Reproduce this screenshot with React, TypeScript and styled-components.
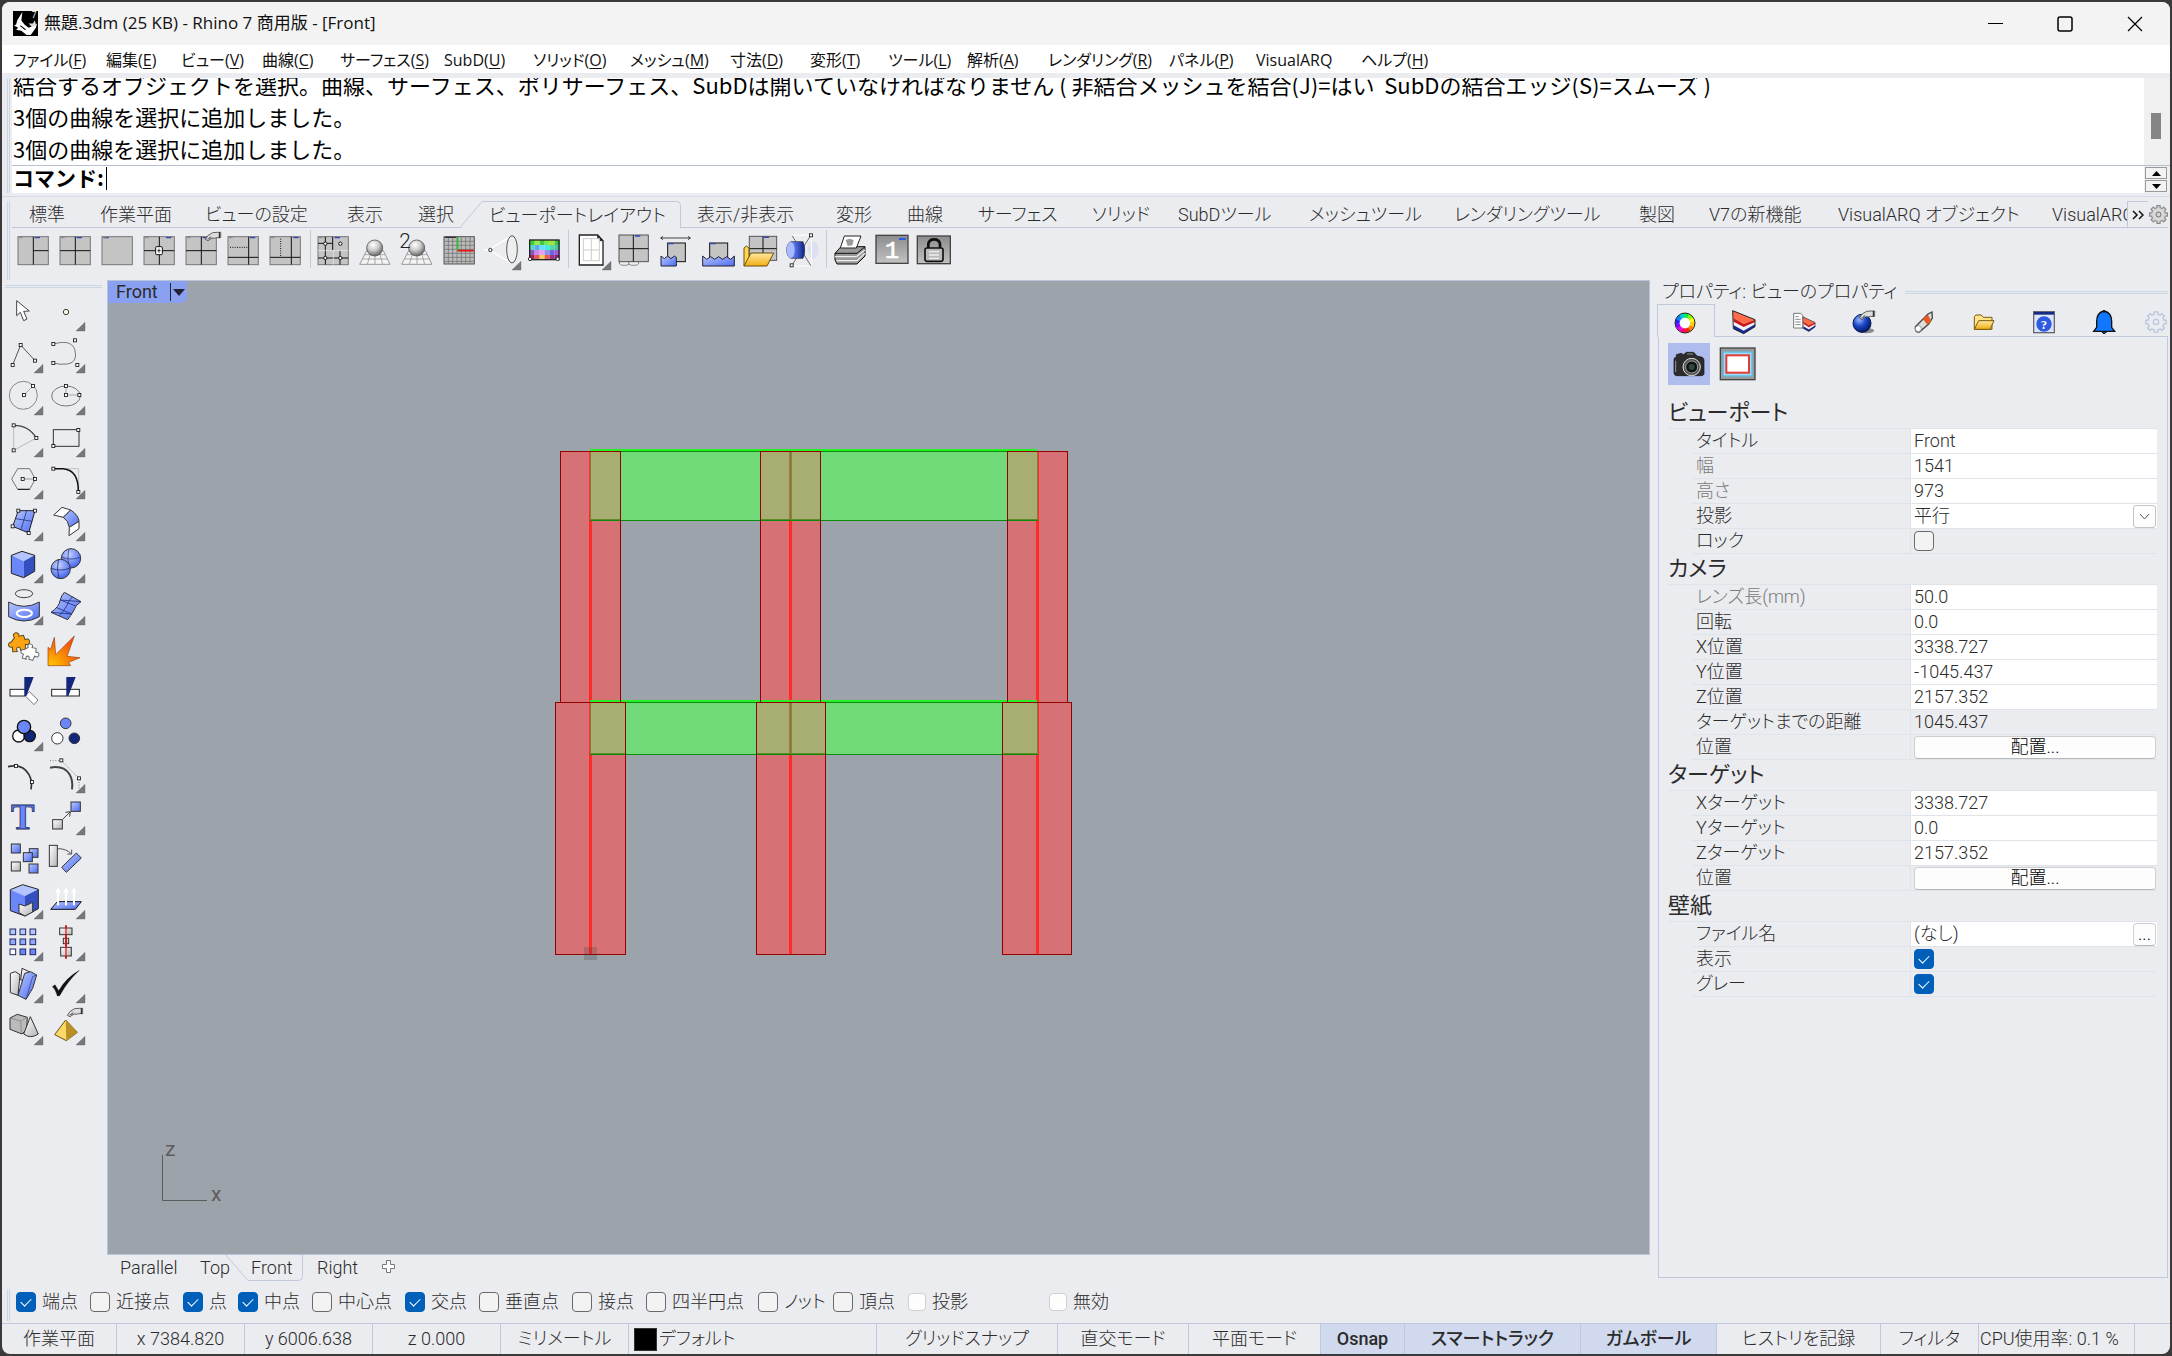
import React from "react";
import styled, { createGlobalStyle, css } from "styled-components";

const ui = `Roboto, "Noto Sans CJK JP", "Liberation Sans", sans-serif`;
const sys = `"Open Sans", "Noto Sans CJK JP", "Noto Sans", sans-serif`;

const C = {
  face: "#ebecf0",
  line: "#c0c8de",
  soft: "#dfe3ea",
  text: "#2b2b2b",
  dim: "#7a7a7a",
  blue: "#6a86f8",
  navy: "#14267a",
  accent: "#005fb8",
};

const Global = createGlobalStyle`
  * { box-sizing: border-box; }
  body { margin: 0; background: #3b3939; }
  button, input, select { font: inherit; color: inherit; margin: 0; }
  button { cursor: default; }
`;

const Frame = styled.div`
  height: 100vh;
  padding: 2px;
  background: #3b3939;
`;

const Window = styled.div`
  height: 100%;
  display: flex;
  flex-direction: column;
  background: ${C.face};
  border-radius: 8px;
  overflow: hidden;
  font-family: ${ui};
  font-weight: 300;
  font-size: 18px;
  line-height: 24px;
  font-feature-settings: "palt";
  color: ${C.text};
  white-space: nowrap;
`;

/* ---------- title and menu ---------- */

const TitleBar = styled.header`
  flex: none;
  height: 43px;
  padding-left: 11px;
  display: flex;
  align-items: center;
  background: #f3f3f3;
  font-family: ${sys};
  font-weight: 400;
  font-size: 17px;
  color: #111;
`;

const TitleText = styled.span`
  flex: 1;
  padding: 0 0 2px 6px;
`;

const CaptionButton = styled.button`
  width: 70px;
  height: 41px;
  padding: 0;
  border: 0;
  background: none;
  display: grid;
  place-items: center;
`;

const MenuBar = styled.nav`
  flex: none;
  height: 28px;
  padding: 2px 0 0 11px;
  display: flex;
  align-items: center;
  background: #fff;
  font-family: ${sys};
  font-weight: 400;
  font-size: 16px;
  color: #111;
`;

const MenuItem = styled.button<{ $w: number }>`
  width: ${(p) => p.$w}px;
  padding: 0;
  border: 0;
  background: none;
  text-align: left;
  u { text-underline-offset: 2px; }
`;

/* ---------- command area ---------- */

const Dock = styled.section`
  flex: none;
  display: flex;
  gap: 2px;
  padding-left: 5px;
`;

const Grip = styled.div`
  width: 3px;
  border: solid #ccd5e2;
  border-width: 0 1px;
`;

const CommandDock = styled(Dock)`
  height: 115px;
  margin-top: 5px;
`;

const CommandBody = styled.div`
  flex: 1;
  min-width: 0;
  display: flex;
  flex-direction: column;
  background: #fff;
  font-family: "Noto Sans CJK JP", sans-serif;
  font-feature-settings: normal;
  font-weight: 400;
  font-size: 22px;
  line-height: 32px;
  color: #000;
`;

const HistoryRow = styled.div`
  flex: 1;
  min-height: 0;
  display: flex;
  border-bottom: 1px solid #b6c2d2;
`;

const History = styled.div`
  flex: 1;
  min-width: 0;
  padding: 0 0 1px 1px;
  display: flex;
  flex-direction: column;
  justify-content: flex-end;
  overflow: hidden;
`;

const HistoryLine = styled.div`
  flex: none;
`;

const ScrollTrack = styled.div`
  width: 26px;
  padding: 35px 9px 0 7px;
  background: #f0f0f0;
`;

const ScrollThumb = styled.div`
  height: 26px;
  background: #858585;
`;

const PromptRow = styled.div`
  flex: none;
  height: 27px;
  display: flex;
  align-items: center;
  gap: 2px;
  padding-left: 1px;
`;

const PromptLabel = styled.label`
  padding-bottom: 4px;
  font-size: 21px;
  line-height: 23px;
  font-weight: 700;
`;

const Caret = styled.span`
  width: 1px;
  height: 23px;
  margin-bottom: 2px;
  background: #000;
`;

const PromptInput = styled.input`
  flex: 1;
  min-width: 0;
  height: 25px;
  border: 0;
  padding: 0;
  outline: 0;
  background: none;
`;

const Spinner = styled.div`
  width: 26px;
  height: 100%;
  padding: 1px 3px 1px 1px;
  display: grid;
  grid-template-rows: 1fr 1fr;
  gap: 1px;
  background: #f0f0f0;
`;

const SpinButton = styled.button`
  padding: 0;
  border: 1px solid #9a9a9a;
  background: #f3f3f3;
  display: grid;
  place-items: center;
`;

/* ---------- ribbon ---------- */

const Ribbon = styled(Dock)`
  height: 84px;
  margin-top: 3px;
  padding-top: 4px;
  border-top: 1px solid #d3dae8;
`;

const RibbonBody = styled.div`
  flex: 1;
  min-width: 0;
  padding-right: 2px;
`;

const RibbonTabs = styled.div`
  height: 27px;
  display: flex;
  padding-left: 17px;
  border-bottom: 1px solid ${C.line};
`;

const RibbonTabScroller = styled.div`
  flex: 1;
  min-width: 0;
  height: 27px;
  display: flex;
  overflow: hidden;
`;

const RibbonTab = styled.button<{ $w: number; $on?: boolean }>`
  flex: none;
  width: ${(p) => p.$w}px;
  height: 26px;
  padding: 2px 0 0;
  border: 0;
  background: none;
  text-align: left;
  ${(p) =>
    p.$on &&
    css`
      position: relative;
      height: 27px;
      margin: 0 16px 0 -7px;
      padding: 1px 0 0 7px;
      background: ${C.face};
      border: solid ${C.line};
      border-width: 1px 1px 0 0;
      border-radius: 0 5px 0 0;
    `}
`;

const TabSlope = styled.svg`
  position: absolute;
  left: -22px;
  top: -1px;
`;

const TabMore = styled.button`
  width: 21px;
  padding: 0;
  border: solid ${C.line};
  border-width: 1px 0 0 1px;
  background: ${C.face};
  display: grid;
  place-items: center;
`;

const GearButton = styled.button`
  width: 20px;
  padding: 0;
  border: 0;
  background: none;
  display: grid;
  place-items: center;
`;

const IconRow = styled.div`
  height: 46px;
  padding: 2px 0;
  display: flex;
`;

const Tool = styled.button`
  width: 42px;
  height: 42px;
  padding: 0;
  border: 0;
  background: none;
  display: block;
`;

const Divider = styled.div`
  width: 6px;
  height: 38px;
  border-left: 1px solid #c9cbd2;
  margin-left: 4px;
  margin-right: -4px;
`;

/* ---------- middle ---------- */

const Middle = styled.main`
  flex: 1;
  min-height: 0;
  display: flex;
`;

const Palette = styled.aside`
  width: 105px;
  padding: 5px 5px 0 0;
`;

const PaletteGrip = styled.div`
  height: 3px;
  margin: 0 0 3px 3px;
  border: solid #ccd5e2;
  border-width: 1px 0;
`;

const PaletteGrid = styled.div`
  display: grid;
  grid-template-columns: 42px 42px;
`;

const ViewColumn = styled.section`
  flex: 1;
  min-width: 0;
  display: flex;
  flex-direction: column;
`;

const Viewport = styled.div`
  flex: 1;
  min-height: 0;
  position: relative;
  border: 1px solid #b9c3da;
  background: #9da3aa;
  overflow: hidden;
`;

const Scene = styled.svg`
  position: absolute;
  inset: 0;
  width: 100%;
  height: 100%;
`;

const Axes = styled.svg`
  position: absolute;
  left: 50px;
  bottom: 48px;
`;

const ViewTitle = styled.button`
  position: absolute;
  left: 0;
  top: 0;
  height: 22px;
  padding: 0 0 0 8px;
  display: flex;
  align-items: center;
  gap: 11px;
  border: 0;
  border-radius: 0 0 6px 0;
  background: #8aa0f0;
  font-weight: 400;
  line-height: 22px;
`;

const ViewTabs = styled.div`
  height: 30px;
  padding-left: 13px;
  display: flex;
  align-items: flex-start;
`;

const ViewTab = styled.button<{ $w: number; $on?: boolean }>`
  width: ${(p) => p.$w}px;
  height: 26px;
  padding: 0;
  border: 0;
  background: none;
  text-align: left;
  ${(p) =>
    p.$on &&
    css`
      position: relative;
      margin-right: 14px;
      padding-left: 3px;
      border: solid ${C.line};
      border-width: 0 1px 1px 0;
      border-radius: 0 0 5px 0;
    `}
`;

const ViewSlope = styled.svg`
  position: absolute;
  left: -22px;
  top: 0;
`;

/* ---------- properties ---------- */

const Side = styled.aside`
  width: 520px;
  padding: 0 2px 7px 7px;
  display: flex;
  flex-direction: column;
`;

const SideTitle = styled.div`
  height: 24px;
  padding-left: 5px;
  display: flex;
  align-items: center;
  gap: 8px;
`;

const SideGrip = styled.div`
  flex: 1;
  height: 3px;
  border: solid #ccd5e2;
  border-width: 1px 0;
`;

const SideTabs = styled.div`
  height: 33px;
  display: flex;
`;

const SideTab = styled.button<{ $on?: boolean }>`
  width: 60px;
  padding: 3px 3px 0 0;
  border: solid ${C.line};
  border-width: 0 0 1px;
  background: none;
  display: grid;
  place-items: center;
  ${(p) =>
    p.$on &&
    css`
      width: 58px;
      border-width: 1px 1px 0 1px;
    `}
  &:last-child {
    flex: 1;
    width: auto;
    padding-right: 0;
    justify-items: end;
  }
`;

const SideBody = styled.div`
  flex: 1;
  min-height: 0;
  margin-left: 1px;
  padding: 6px 10px 0 9px;
  border: solid ${C.line};
  border-width: 0 1px 1px;
`;

const ModeRow = styled.div`
  display: flex;
  gap: 7px;
  margin-bottom: 13px;
`;

const ModeButton = styled.button<{ $on?: boolean }>`
  width: 42px;
  height: 42px;
  padding: 0;
  border: 0;
  background: ${(p) => (p.$on ? "#aebcee" : "none")};
`;

const GroupTitle = styled.h2`
  height: 31px;
  margin: 0;
  border-bottom: 1px solid ${C.soft};
  font-size: 22px;
  line-height: 30px;
  font-weight: 400;
`;

const Row = styled.div`
  height: 25px;
  margin-left: 24px;
  display: grid;
  grid-template-columns: 219px 1fr;
  border-bottom: 1px solid ${C.soft};
`;

const RowLabel = styled.label<{ $dim?: boolean }>`
  padding-left: 4px;
  border-right: 1px solid ${C.soft};
  color: ${(p) => (p.$dim ? C.dim : C.text)};
`;

const Cell = styled.div<{ $white?: boolean }>`
  min-width: 0;
  display: flex;
  align-items: center;
  position: relative;
  padding-left: 3px;
  background: ${(p) => (p.$white ? "#fff" : "none")};
`;

const CellInput = styled.input`
  flex: 1;
  min-width: 0;
  height: 24px;
  border: 0;
  padding: 0;
  background: none;
  outline: 0;
`;

const CellSelect = styled.select`
  flex: 1;
  height: 24px;
  border: 0;
  padding: 0;
  background: none;
  appearance: none;
  outline: 0;
`;

const Chevron = styled.span`
  position: absolute;
  right: 1px;
  top: 1px;
  width: 23px;
  height: 23px;
  border: 1px solid #c4c4c4;
  border-radius: 3px;
  background: #fdfdfd;
  display: grid;
  place-items: center;
  pointer-events: none;
`;

const PushButton = styled.button<{ $small?: boolean }>`
  height: 23px;
  padding: 0;
  border: 1px solid #cfcfcf;
  border-bottom-color: #b8b8b8;
  border-radius: 4px;
  background: #fdfdfd;
  color: #000;
  line-height: 20px;
  ${(p) => (p.$small ? "width: 23px;" : "flex: 1;")}
  margin-right: 1px;
`;

const Check = styled.input<{ $faint?: boolean }>`
  appearance: none;
  flex: none;
  width: ${(p) => (p.$faint ? 18 : 20)}px;
  height: ${(p) => (p.$faint ? 18 : 20)}px;
  border: 1px solid ${(p) => (p.$faint ? "#d0d0d0" : "#6a6a6a")};
  border-radius: 4px;
  background: ${(p) => (p.$faint ? "#fdfdfd" : "#f3f3f3")};
  display: grid;
  place-content: center;
  &:checked {
    background: ${C.accent};
    border-color: ${C.accent};
  }
  &:checked::after {
    content: "";
    width: 9px;
    height: 5px;
    border: solid #fff;
    border-width: 0 0 1px 1px;
    transform: rotate(-45deg);
    margin-bottom: 3px;
  }
`;

/* ---------- bottom bars ---------- */

const SnapBar = styled(Dock)`
  height: 38px;
  padding-top: 4px;
  padding-bottom: 2px;
  gap: 6px;
`;

const Snaps = styled.div`
  display: flex;
  align-items: center;
  padding-bottom: 6px;
`;

const Snap = styled.label<{ $w: number }>`
  width: ${(p) => p.$w}px;
  display: flex;
  align-items: center;
  gap: 6px;
`;

const Status = styled.footer`
  flex: none;
  height: 31px;
  display: grid;
  grid-template-columns: 115fr 128fr 128fr 128fr 128fr 248fr 181fr 131fr 132fr 84fr 176fr 136fr 164fr 98fr 156fr 35fr;
  border-top: 1px solid ${C.line};
`;

const StatusCell = styled.button<{ $on?: boolean }>`
  min-width: 0;
  padding: 0;
  border: 0;
  border-right: 1px solid ${C.line};
  background: ${(p) => (p.$on ? "#d0d9ee" : "none")};
  font-weight: ${(p) => (p.$on ? 500 : 300)};
  text-align: center;
  &:last-child { border-right: 0; }
`;

const LayerCell = styled(StatusCell)`
  display: flex;
  align-items: center;
  gap: 2px;
  padding-left: 5px;
`;

const MeterCell = styled(StatusCell)`
  padding-left: 1px;
  text-align: left;
`;

const Swatch = styled.span`
  width: 23px;
  height: 23px;
  background: #000;
  border: 1px solid #333;
`;

/* ---------- icon parts ---------- */

const N = ({ x, y }: { x: number; y: number }) => (
  <rect x={x - 4.5} y={y - 4.5} width="9" height="9" fill="#fff" stroke="#111" strokeWidth="2.5" />
);

const GradientDefs = styled.svg`
  position: absolute;
`;

const Gradients = () => (
  <GradientDefs width="0" height="0" aria-hidden="true">
    <defs>
      <linearGradient id="gb" x1="0" y1="0" x2="1" y2="1">
        <stop offset="0" stopColor="#b9c8ff" />
        <stop offset="1" stopColor="#4d6cf0" />
      </linearGradient>
      <linearGradient id="gcyl" x1="0" y1="0" x2="1" y2="0">
        <stop offset="0" stopColor="#9fb2fb" />
        <stop offset="0.4" stopColor="#5b7af5" />
        <stop offset="1" stopColor="#0e2280" />
      </linearGradient>
      <linearGradient id="gg" x1="0" y1="0" x2="1" y2="1">
        <stop offset="0" stopColor="#fff" />
        <stop offset="1" stopColor="#b4b4b4" />
      </linearGradient>
      <linearGradient id="gk" x1="0" y1="0" x2="0" y2="1">
        <stop offset="0" stopColor="#8c8c8c" />
        <stop offset="1" stopColor="#c2c2c2" />
      </linearGradient>
      <linearGradient id="gy" x1="0" y1="0" x2="0" y2="1">
        <stop offset="0" stopColor="#ffe9a0" />
        <stop offset="1" stopColor="#f3ad12" />
      </linearGradient>
      <radialGradient id="gs" cx="0.4" cy="0.3" r="0.7">
        <stop offset="0" stopColor="#fff" />
        <stop offset="0.5" stopColor="#ccc" />
        <stop offset="1" stopColor="#666" />
      </radialGradient>
      <radialGradient id="gbs" cx="0.4" cy="0.3" r="0.7">
        <stop offset="0" stopColor="#c6d2ff" />
        <stop offset="1" stopColor="#4466ee" />
      </radialGradient>
      <radialGradient id="gdb" cx="0.35" cy="0.3" r="0.7">
        <stop offset="0" stopColor="#9db8ff" />
        <stop offset="0.5" stopColor="#1c49c8" />
        <stop offset="1" stopColor="#041a6a" />
      </radialGradient>
      <radialGradient id="gf" cx="0.1" cy="1" r="1">
        <stop offset="0" stopColor="#ffc400" />
        <stop offset="1" stopColor="#f0500a" />
      </radialGradient>
    </defs>
  </GradientDefs>
);

type Icon = { n: string; t?: boolean; g: React.ReactNode };

const Glyph = ({ x, y, icon }: { x: number; y: number; icon: Icon }) => (
  <svg width="42" height="42" viewBox={`${x} ${y} 126 126`} fill="none" stroke="#333" strokeWidth="3" aria-hidden="true">
    {icon.g}
    {icon.t && <path d={`M${x + 96} ${y + 120}L${x + 123} ${y + 94}V${y + 120}Z`} fill="#77787c" stroke="#55565a" strokeWidth="1" />}
  </svg>
);

const Hand = ({ x, y }: { x: number; y: number }) => (
  <g transform={`translate(${x} ${y})`}>
    <path d="M0 22Q6 8 22 2L36 1H46V17H34Q28 20 20 18L8 26Z" fill="#ddd" stroke="#444" strokeWidth="2.5" />
    <path d="M42 1V18" stroke="#111" strokeWidth="3" />
    <path d="M4 22L18 12L16 22Z" fill="#777" stroke="none" />
  </g>
);

const puzzle = "M-22-8L-10-18Q-16-30-4-32Q8-30 4-20L18-20L20-6Q32-10 32 2Q30 14 18 8L14 24L0 22Q2 12-6 12Q-14 14-10 24L-24 22L-22 8Q-34 8-32-2Q-30-8-22-8Z";

const palette: Icon[] = [
  { n: "選択", g: <path d="M50 62V107L61 97L71 122L81 117L71 94L88 93Z" fill="#fff" stroke="#444" /> },
  { n: "点", t: true, g: <circle cx="198" cy="96" r="8" fill="#f4f8e8" stroke="#444" /> },
  { n: "ポリライン", t: true, g: <><path d="M38 255L62 195L105 242" stroke="#555" /><N x={38} y={255} /><N x={62} y={195} /><N x={105} y={242} /></> },
  { n: "曲線", t: true, g: <><path d="M160 192C190 184 216 184 224 208C230 232 226 248 202 252Q180 255 160 249" stroke="#777" /><N x={160} y={192} /><N x={160} y={249} /><N x={225} y={181} /><N x={232} y={255} /></> },
  { n: "円", t: true, g: <><circle cx="70" cy="346" r="42" stroke="#888" /><path d="M72 345L99 318" stroke="#aaa" /><N x={72} y={345} /><N x={99} y={318} /></> },
  { n: "楕円", t: true, g: <><ellipse cx="198" cy="348" rx="43" ry="30" stroke="#777" /><path d="M198 318V345H238" stroke="#888" strokeWidth="2" /><N x={198} y={318} /><N x={198} y={345} /><N x={238} y={345} /></> },
  { n: "円弧", t: true, g: <><path d="M41 436V511L109 474" stroke="#bbb" /><path d="M41 436Q86 436 109 474" stroke="#444" strokeWidth="4" /><N x={41} y={436} /><N x={41} y={511} /><N x={109} y={474} /></> },
  { n: "長方形", t: true, g: <><rect x="160" y="449" width="77" height="50" stroke="#333" /><N x={235} y={450} /><N x={160} y={498} /></> },
  { n: "多角形", t: true, g: <><path d="M35 597L53 566H89L106 597L89 628H53Z" stroke="#777" /><path d="M53 628H89" stroke="#111" /><path d="M68 597H105" stroke="#999" /><N x={68} y={597} /><N x={105} y={597} /></> },
  { n: "フィレット", t: true, g: <><path d="M160 566H236V636" stroke="#aaa" strokeWidth="2" /><path d="M160 566H190Q236 570 235 636" stroke="#111" strokeWidth="4.5" /><N x={160} y={566} /><N x={235} y={636} /></> },
  { n: "サーフェス", t: true, g: <><path d="M55 692H105L86 759L38 739Z" fill="url(#gb)" stroke="#222" /><path d="M80 692L63 749M47 716L97 724" stroke="#24367a" strokeWidth="2.5" /><N x={55} y={692} /><N x={105} y={692} /><N x={86} y={759} /><N x={38} y={739} /></> },
  { n: "ロフト", t: true, g: <><path d="M161 705L186 682L212 690L190 712Z" fill="#fff" /><path d="M190 712L212 690Q236 706 237 724L208 742Q205 722 190 712Z" fill="url(#gb)" /><path d="M208 742L237 724V746L207 767Z" fill="#fff" /></> },
  { n: "直方体", t: true, g: <><path d="M34 826L66 814L104 826L71 844Z" fill="#b4c4ff" stroke="none" /><path d="M34 826L71 844V893L34 880Z" fill="#6a86f8" stroke="none" /><path d="M71 844L104 826V874L71 893Z" fill="#3450c0" stroke="none" /><path d="M34 826L66 814L104 826V874L71 893L34 880Z" stroke="#222" /></> },
  { n: "球", t: true, g: <><circle cx="213" cy="835" r="29" fill="url(#gbs)" /><path d="M186 832Q213 842 241 832M206 808Q200 835 208 862" stroke="#1c2c70" strokeWidth="2" /><circle cx="182" cy="867" r="29" fill="url(#gbs)" /><path d="M154 865Q182 876 210 864M175 840Q169 867 177 894" stroke="#1c2c70" strokeWidth="2.5" /></> },
  { n: "投影", t: true, g: <><ellipse cx="72" cy="941" rx="26" ry="12" stroke="#444" /><path d="M26 966Q72 992 118 966V1010Q72 1036 26 1010Z" fill="url(#gb)" /><ellipse cx="73" cy="1000" rx="23" ry="11" stroke="#fff" strokeWidth="6" /></> },
  { n: "メッシュ", t: true, g: <><path d="M193 937L243 965Q226 975 222 990Q212 1008 203 1019L153 997Q178 980 180 962Q184 946 193 937Z" fill="url(#gb)" /><path d="M218 950Q204 962 200 978Q190 995 178 1008M181 960L228 978M168 982L215 1002M181 960L243 965M153 997L215 1002" stroke="#1c2c80" strokeWidth="2.5" /></> },
  { n: "結合", g: <><g transform="translate(57 1089) rotate(-12)"><path d={puzzle} fill="#fca311" stroke="#5a4a20" /></g><g transform="translate(90 1119) rotate(10) scale(.85)"><path d={puzzle} fill="#fff" stroke="#666" strokeWidth="3.5" /></g></> },
  { n: "分解", g: <path d="M144 1157V1102L152 1108L163 1072L167 1124L223 1068L201 1129L240 1133L206 1147L212 1157Z" fill="url(#gf)" stroke="#a04010" strokeWidth="2" /> },
  { n: "トリム", g: <><rect x="30" y="88" width="46" height="20" fill="#fff" stroke="#222" /><path d="M88 95L114 120L102 134L76 108Z" fill="#fff" stroke="#777" /><path d="M73 51H101L79 108H73Z" fill={C.navy} stroke="none" /></> },
  { n: "分割", g: <><rect x="155" y="88" width="83" height="20" fill="#fff" stroke="#222" /><path d="M199 51H227L205 108H199Z" fill={C.navy} stroke="none" /></> },
  { n: "グループ化", t: true, g: <g stroke="#111" strokeWidth="4"><circle cx="56" cy="228" r="18" fill="#fff" /><circle cx="89" cy="228" r="17" fill={C.navy} /><circle cx="72" cy="201" r="20" fill={C.blue} /></g> },
  { n: "グループ解除", g: <><circle cx="197" cy="190" r="16" fill={C.blue} /><circle cx="172" cy="235" r="17" fill="#fff" /><circle cx="223" cy="235" r="16" fill={C.navy} /></> },
  { n: "点を表示", g: <><path d="M24 320Q68 310 87 344Q98 364 93 388" stroke="#333" strokeWidth="5" /><N x={48} y={318} /><N x={96} y={366} /></> },
  { n: "点を編集", t: true, g: <><path d="M150 323Q190 315 208 342Q220 362 216 388" stroke="#444" strokeWidth="6" /><path d="M150 302H184L237 355V385" stroke="#666" strokeWidth="2.5" strokeDasharray="3 5" /><N x={184} y={301} /><N x={237} y={355} /></> },
  { n: "テキスト", g: <text x="68" y="506" fontSize="106" fontFamily="Liberation Serif, serif" fontWeight="700" textAnchor="middle" fill={C.blue} stroke="#222a60" strokeWidth="2.5">T</text> },
  { n: "移動", t: true, g: <><rect x="158" y="479" width="29" height="28" fill="url(#gg)" /><path d="M188 478L210 456M196 457L211 455L209 470" stroke="#444" /><rect x="213" y="426" width="28" height="28" fill="url(#gb)" /></> },
  { n: "コピー", g: <><rect x="34" y="552" width="27" height="27" fill="url(#gb)" /><rect x="34" y="606" width="27" height="27" fill="url(#gg)" /><rect x="88" y="566" width="26" height="26" fill="url(#gb)" /><rect x="70" y="578" width="27" height="27" fill="url(#gb)" /><rect x="87" y="612" width="27" height="27" fill="url(#gb)" /></> },
  { n: "回転", g: <><rect x="148" y="556" width="24" height="63" fill="url(#gg)" /><path d="M174 566Q200 566 214 582M202 582H215V569" stroke="#555" /><path d="M185 622L229 579L244 594L199 637Z" fill="url(#gb)" /></> },
  { n: "ソリッド編集", t: true, g: <><path d="M31 689L68 674L115 688L75 708Z" fill="#b4c4ff" stroke="none" /><path d="M31 689L75 708V768L31 752Z" fill={C.blue} stroke="none" /><path d="M75 708L115 688V746L75 768Z" fill="#3450c0" stroke="none" /><path d="M31 689L68 674L115 688V746L75 768L31 752Z" stroke="#222" /><path d="M57 732L75 738L98 727V756L75 768L57 758Z" fill="url(#gg)" stroke="#333" /></> },
  { n: "押し出し", t: true, g: <><path d="M152 748L172 725H244L226 748Z" fill="url(#gb)" stroke="#111" /><path d="M174 736V696M198 736V696M222 736V696" stroke="#fff" strokeWidth="6" /><path d="M166 698L174 680L182 698ZM190 698L198 680L206 698ZM214 698L222 680L230 698Z" fill="#fff" stroke="none" /></> },
  { n: "配列", t: true, g: <>{[0, 1, 2].map((r) => [0, 1, 2].map((c) => <rect key={`${r}${c}`} x={30 + c * 30} y={807 + r * 30} width="17" height="17" fill={r === 2 && c === 0 ? "#fff" : r === 2 ? "#6a86f8" : r === 1 ? "#92a8fc" : "#b4c4ff"} stroke="#222c60" />))}</> },
  { n: "整列", t: true, g: <><rect x="179" y="804" width="37" height="20" fill="url(#gg)" /><rect x="190" y="835" width="16" height="16" fill="url(#gg)" /><rect x="182" y="862" width="32" height="26" fill="url(#gg)" /><path d="M198 796V896" stroke="#cc1c1c" strokeWidth="6" /><path d="M198 806V822M198 864V886" stroke="#f08080" strokeWidth="4" /></> },
  { n: "変形", t: true, g: <><path d="M62 960L66 925L90 936L78 960Z" fill="#eee" /><path d="M31 940L46 935L60 944L54 1006L31 998Z" fill="url(#gg)" /><path d="M54 1006L74 940L92 935L110 945L98 985L78 1018Z" fill="url(#gb)" /><path d="M78 1018L98 950L110 945" stroke="#24367a" strokeWidth="2" /></> },
  { n: "チェック", t: true, g: <path d="M157 980L165 974L176 992Q200 952 238 931Q204 962 179 1007L172 1008Q166 986 157 980Z" fill="#111" stroke="#111" strokeWidth="1" /> },
  { n: "表示", t: true, g: <><path d="M30 1074L52 1063L82 1072L80 1108L66 1122L30 1108Z" fill="#bbb" /><path d="M30 1074L62 1083L82 1072M62 1083L64 1121" stroke="#777" strokeWidth="2" /><path d="M91 1070L115 1122Q92 1138 71 1122Z" fill="url(#gg)" /></> },
  { n: "ヒストリ", t: true, g: <><path d="M197 1080L232 1117L199 1142L164 1124Z" fill="#fbd868" stroke="#6a5010" /><path d="M197 1080L232 1117L199 1142Z" fill="#b89024" stroke="none" /><Hand x={202} y={1044} /></> },
];

const Pane = ({ d, mark = 68 }: { d: string; mark?: number }) => (
  <>
    <rect x="18" y="20" width="91" height="84" fill="#c4c4c4" stroke="#777" />
    <path d={d} stroke="#111" strokeWidth="3" />
    <path d={`M${mark} 23H${mark + 16}`} stroke="#2c46b8" strokeWidth="4" />
    <path d="M20 23H32" stroke="#888" />
  </>
);

const Plane = () => (
  <>
    <path d="M38 62H88L108 103H17Z" fill="#f4f4f4" stroke="#888" strokeWidth="2.5" />
    <path d="M52 62L40 103M63 62V103M75 62L86 103M32 74H94M26 87H100" stroke="#999" strokeWidth="2.5" />
  </>
);

const Ball = () => (
  <>
    <Plane />
    <circle cx="62" cy="54" r="24" fill="url(#gs)" stroke="#555" strokeWidth="2.5" />
  </>
);

const hues = ["#3cd030", "#90f048", "#48c840", "#70f048", "#a8e040", "#38c848", "#58d8c0", "#60a8f0", "#68e0f8", "#48e8f0", "#58d8a0", "#40c8a0", "#8858c0", "#d088e8", "#e8a0f0", "#9090e8", "#6868d8", "#a858d8", "#a02850", "#e85858", "#f0d060", "#e86048", "#a03090", "#802878"];

const topIcons: (Icon & { x: number; y: number })[] = [
  { n: "3ビュー", x: 0, y: 0, g: <Pane d="M64 20V104M64 62H109" /> },
  { n: "4ビュー", x: 0, y: 0, g: <Pane d="M64 20V104M18 62H109" /> },
  { n: "最大化", x: 0, y: 0, g: <Pane d="M18 20" mark={22} /> },
  { n: "新規ビュー", x: 0, y: 0, g: <><Pane d="M64 20V104M18 62H109" mark={84} /><rect x="53" y="50" width="20" height="24" rx="3" fill="#fff" stroke="#111" /><path d="M63 56V68M58 62H68" stroke="#111" strokeWidth="2.5" /></> },
  { n: "ビューを編集", x: 0, y: 0, g: <><Pane d="M64 20V104M18 62H109" /><Hand x={76} y={6} /></> },
  { n: "水平分割", x: 0, y: 0, g: <><Pane d="M80 20V104M18 82H109" mark={84} /><path d="M24 52H80" stroke="#111" strokeDasharray="3 4" /></> },
  { n: "垂直分割", x: 0, y: 0, g: <><Pane d="M82 20V104M18 82H109" mark={88} /><path d="M50 26V80" stroke="#111" strokeDasharray="3 4" /></> },
  { n: "同期", x: 0, y: 0, g: <><Pane d="M40 20V104M18 84H109M84 62V104M18 40H62M62 20V60" /><path d="M18 62H109M64 62V104" stroke="#eee" strokeWidth="2" /><circle cx="40" cy="41" r="5" fill="#fff" stroke="#111" /><circle cx="85" cy="41" r="5" fill="#fff" stroke="#111" /><circle cx="40" cy="84" r="5" fill="#fff" stroke="#111" /><circle cx="85" cy="84" r="5" fill="#fff" stroke="#111" /></> },
  { n: "作業平面", x: 0, y: 0, g: <Ball /> },
  { n: "2点", x: 0, y: 0, g: <><Ball /><text x="10" y="54" fontSize="62" fontFamily="Roboto, sans-serif" fill="#222" stroke="none">2</text></> },
  { n: "グリッド", x: -39, y: 30, g: <><rect x="-21" y="50" width="91" height="82" fill="#bcbcbc" stroke="#555" />{[0, 1, 2, 3, 4, 5].map((i) => <path key={i} d={`M${-8 + i * 13} 50V132M-21 ${64 + i * 12}H70`} stroke="#777" strokeWidth="2.5" />)}<path d="M20 92V52" stroke="#28c828" strokeWidth="5" /><path d="M20 92H68" stroke="#e81010" strokeWidth="5" /><path d="M-18 52H16" stroke="#333" strokeWidth="4" /></> },
  { n: "レンズ", x: 87, y: 30, t: true, g: <><path d="M100 90H112M122 84L178 50M122 94L178 128" stroke="#fff" strokeWidth="4" /><circle cx="118" cy="90" r="5" fill="#fff" /><ellipse cx="183" cy="88" rx="16" ry="41" fill="#eee" stroke="#555" /></> },
  { n: "レンダリング", x: 213, y: 30, g: <><g stroke="none">{hues.map((h, i) => <rect key={i} x={236 + (i % 6) * 15} y={60 + Math.floor(i / 6) * 15} width="15" height="15" fill={h} />)}</g><rect x="236" y="60" width="88" height="59" stroke="#222" strokeWidth="4" /><circle cx="237" cy="117" r="5" fill="#fff" /><circle cx="320" cy="117" r="5" fill="#fff" /></> },
  { n: "レイアウト", x: 357, y: 30, t: true, g: <><path d="M385 45H440L456 62V135H385Z" fill="#fff" stroke="#222" strokeWidth="4" /><path d="M440 45V62H456Z" fill="#222" /><rect x="397" y="56" width="48" height="66" fill="#fff" stroke="#ccc" /><path d="M421 56V122M397 90H445" stroke="#ccc" /></> },
  { n: "ビュー表示", x: 483, y: 30, g: <><ellipse cx="520" cy="129" rx="15" ry="7" fill="#eee" stroke="#888" /><ellipse cx="548" cy="129" rx="15" ry="7" fill="#eee" stroke="#888" /><rect x="504" y="45" width="88" height="80" fill="#c4c4c4" stroke="#555" /><path d="M547 45V125M504 86H592" stroke="#111" /><path d="M552 48H568" stroke="#2c46b8" strokeWidth="4" /></> },
  { n: "幅", x: 609, y: 30, g: <><path d="M629 54H718M636 49L629 54L636 59M711 49L718 54L711 59" stroke="#222" strokeWidth="2.5" /><rect x="650" y="69" width="53" height="56" fill="#c4c4c4" stroke="#111" /><path d="M652 71H668" stroke="#2c46b8" strokeWidth="4" /><path d="M630 108L640 116L650 108L660 116L670 108L676 112V138H630Z" fill="url(#gb)" stroke="#223" /></> },
  { n: "サイズ", x: 735, y: 30, g: <><rect x="776" y="69" width="54" height="50" fill="#c4c4c4" stroke="#111" /><path d="M778 71H794" stroke="#2c46b8" strokeWidth="4" /><path d="M755 108L767 118L779 110L791 118L803 110L815 118L827 110L839 118L850 108V138H755Z" fill="url(#gb)" stroke="#223" /></> },
  { n: "開く", x: 861, y: 30, g: <><rect x="895" y="49" width="82" height="72" fill="#c4c4c4" stroke="#555" /><path d="M936 49V121M895 86H977" stroke="#111" /><path d="M938 52H954" stroke="#2c46b8" strokeWidth="4" /><path d="M879 138V84L886 78L894 84V110L910 100Z" fill="#ffd850" stroke="#6a5010" /><path d="M879 138L900 99H968L948 138Z" fill="url(#gy)" stroke="#6a5010" /></> },
  { n: "カメラ", x: 987, y: 30, g: <><ellipse cx="1087" cy="90" rx="16" ry="26" fill="#dde0ee" stroke="none" /><path d="M1028 45H1081V138H1028" stroke="#fff" /><path d="M1024 48L1080 138M1078 48L1024 134" stroke="#555" strokeWidth="2.5" /><path d="M1020 65H1056Q1066 90 1056 115H1020Q1008 112 1007 90Q1008 68 1020 65Z" fill="url(#gcyl)" stroke="#223" strokeWidth="2" /><ellipse cx="1019" cy="90" rx="12" ry="24" fill="#a9baff" stroke="none" /><N x={1080} y={46} /><N x={1022} y={136} /></> },
  { n: "印刷", x: 1131, y: 30, g: <><path d="M1152 100L1170 80H1242V108L1218 132H1158L1152 120Z" fill="#999" stroke="#111" /><path d="M1152 100H1218L1242 80" stroke="#111" /><path d="M1152 110H1216L1242 90M1156 122H1218L1242 100" stroke="#eee" strokeWidth="4" /><path d="M1168 84L1180 48H1230L1216 84Z" fill="#fff" stroke="#222" /><path d="M1184 60L1196 56L1208 60L1204 76L1190 78Z" fill="#999" stroke="none" /></> },
  { n: "1", x: 1257, y: 30, g: <><rect x="1275" y="46" width="96" height="84" fill="url(#gk)" stroke="#444" strokeWidth="4" /><path d="M1344 57H1364" stroke="#2858f0" strokeWidth="6" /><text x="1323" y="114" fontSize="70" fontFamily="Liberation Mono, monospace" textAnchor="middle" fill="#fff" stroke="#fff" strokeWidth="2">1</text></> },
  { n: "ロック", x: 1383, y: 30, g: <><rect x="1399" y="48" width="99" height="83" fill="url(#gk)" stroke="#444" strokeWidth="4" /><path d="M1432 86V72Q1434 58 1449 58Q1465 58 1467 72V86" stroke="#111" strokeWidth="8" /><rect x="1422" y="84" width="54" height="40" rx="6" fill="#bbb" stroke="#111" strokeWidth="5" /><path d="M1434 95H1464M1434 105H1464M1434 115H1464" stroke="#eee" strokeWidth="4" /></> },
];

const Wheel = () => {
  const cols = ["#ff0", "#8f0", "#0e4", "#0cc", "#08f", "#22f", "#80f", "#e0e", "#f06", "#f20", "#f80", "#fc0"];
  return (
    <svg width="30" height="30" viewBox="85 113 90 90" fill="none">
      {cols.map((c, i) => {
        const a = ((i * 30 + 5) * Math.PI) / 180;
        const b = ((i * 30 + 37) * Math.PI) / 180;
        const r = 22;
        return <path key={c} d={`M${130 + r * Math.cos(a)} ${158 - r * Math.sin(a)}A${r} ${r} 0 0 0 ${130 + r * Math.cos(b)} ${158 - r * Math.sin(b)}`} stroke={c} strokeWidth="14" />;
      })}
      <circle cx="130" cy="158" r="30" stroke="#222" strokeWidth="3" />
      <circle cx="130" cy="158" r="16" fill="#fff" stroke="#bbb" strokeWidth="1" />
    </svg>
  );
};

const Gear = ({ color, fill, size }: { color: string; fill: string; size: number }) => (
  <svg width={size} height={size} viewBox="-36 -36 72 72" fill="none" stroke={color} strokeWidth="4" aria-hidden="true">
    <path
      d={Array.from({ length: 8 }, (_, i) => {
        const p = (r: number, o: number) => {
          const a = ((i * 45 + o) * Math.PI) / 180;
          return `${(r * Math.cos(a)).toFixed(1)} ${(r * Math.sin(a)).toFixed(1)}`;
        };
        return `${i ? "L" : "M"}${p(24, -19)}L${p(24, -13)}L${p(31, -10)}L${p(31, 10)}L${p(24, 13)}L${p(24, 19)}`;
      }).join("") + "Z"}
      fill={fill}
    />
    <circle r="8" />
  </svg>
);

const Slice = () => (
  <>
    <path d="M268 124L335 151V172L301 193L270 178Z" fill="#f0f0fa" />
    <path d="M268 124L335 151L301 164L270 146Z" fill="#ff6a48" />
    <path d="M270 146L301 164L335 151V158L301 173L271 157Z" fill="#c81818" />
    <path d="M271 168L301 184L335 165V172L301 193L271 179Z" fill="#142a98" />
    <path d="M268 124L335 151V172L301 193L270 178Z" fill="none" stroke="#222" strokeWidth="3" />
  </>
);

const sideIcons: { n: string; g: React.ReactNode }[] = [
  { n: "プロパティ", g: <Wheel /> },
  { n: "レイヤ", g: <svg width="30" height="30" viewBox="257 113 90 90"><Slice /></svg> },
  { n: "表示", g: <svg width="30" height="30" viewBox="435 113 90 90"><path d="M449 132H470L477 139V176H449Z" fill="#fff" stroke="#777" strokeWidth="3" /><path d="M454 142H464M454 150H470M454 158H470M454 166H470" stroke="#888" strokeWidth="3" /><g transform="translate(329 63) scale(.55 .64)"><Slice /></g></svg> },
  { n: "レンダリング", g: <svg width="30" height="30" viewBox="613 113 90 90" fill="none"><ellipse cx="664" cy="184" rx="24" ry="8" fill="#888" /><circle cx="652" cy="162" r="27" fill="url(#gdb)" stroke="#081a50" strokeWidth="3" /><Hand x={644} y={124} /></svg> },
  { n: "マテリアル", g: <svg width="30" height="30" viewBox="791 113 90 90"><path d="M810 172L848 134L860 128L861 146L850 164L822 188Q808 190 810 172Z" fill="#ddd" stroke="#444" strokeWidth="4" /><path d="M832 148L848 136L858 156L846 166Z" fill="#e85a20" /><circle cx="819" cy="178" r="9" fill="#fff" stroke="#777" strokeWidth="2" /></svg> },
  { n: "ライブラリ", g: <svg width="30" height="30" viewBox="965 113 90 90"><path d="M981 180V142L986 137H1002L1008 144H1034V180Z" fill="#ffe488" stroke="#7a5a10" strokeWidth="3" /><path d="M981 180L994 154H1040L1028 180Z" fill="url(#gy)" stroke="#7a5a10" strokeWidth="3" /></svg> },
  { n: "ヘルプ", g: <svg width="30" height="30" viewBox="1142 113 90 90"><rect x="1156" y="127" width="62" height="63" fill="#dde4f8" stroke="#667" strokeWidth="4" /><path d="M1157 132H1217" stroke="#142a80" strokeWidth="8" /><circle cx="1187" cy="164" r="23" fill="#2c5ae0" /><text x="1187" y="178" fontSize="38" fontWeight="700" textAnchor="middle" fill="#fff" fontFamily="Liberation Serif, serif">?</text></svg> },
  { n: "通知", g: <svg width="30" height="30" viewBox="1319 113 90 90"><path d="M1364 125Q1342 130 1342 156V174L1333 186H1396L1387 174V156Q1387 130 1364 125Z" fill="#0f78ff" stroke="#111" strokeWidth="4" /><path d="M1358 188Q1364 198 1371 188Z" fill="#0f78ff" stroke="#111" strokeWidth="3" /><circle cx="1364" cy="126" r="4" fill="#111" /></svg> },
  { n: "オプション", g: <Gear size={24} color="#b9c6dc" fill="none" /> },
];

/* ---------- data ---------- */

const menus: [string, string, number][] = [
  ["ファイル", "F", 93], ["編集", "E", 75], ["ビュー", "V", 81], ["曲線", "C", 78], ["サーフェス", "S", 104], ["SubD", "U", 89],
  ["ソリッド", "O", 97], ["メッシュ", "M", 100], ["寸法", "D", 80], ["変形", "T", 78], ["ツール", "L", 79], ["解析", "A", 81],
  ["レンダリング", "R", 121], ["パネル", "P", 87], ["VisualARQ", "", 105], ["ヘルプ", "H", 80],
];

const ribbonTabs: [string, number][] = [
  ["標準", 71], ["作業平面", 105], ["ビューの設定", 142], ["表示", 71], ["選択", 71], ["ビューポートレイアウト", 199],
  ["表示/非表示", 139], ["変形", 71], ["曲線", 71], ["サーフェス", 114], ["ソリッド", 86], ["SubDツール", 131],
  ["メッシュツール", 145], ["レンダリングツール", 185], ["製図", 70], ["V7の新機能", 129], ["VisualARQ オブジェクト", 214], ["VisualARQ", 100],
];

type Prop = { l: string; v?: string; dim?: boolean; k?: "text" | "plain" | "select" | "button" | "file" | "on" | "off" };

const groups: { t: string; rows: Prop[] }[] = [
  { t: "ビューポート", rows: [{ l: "タイトル", v: "Front" }, { l: "幅", v: "1541", dim: true }, { l: "高さ", v: "973", dim: true }, { l: "投影", v: "平行", k: "select" }, { l: "ロック", k: "off" }] },
  { t: "カメラ", rows: [{ l: "レンズ長(mm)", v: "50.0", dim: true }, { l: "回転", v: "0.0" }, { l: "X位置", v: "3338.727" }, { l: "Y位置", v: "-1045.437" }, { l: "Z位置", v: "2157.352" }, { l: "ターゲットまでの距離", v: "1045.437", k: "plain" }, { l: "位置", v: "配置...", k: "button" }] },
  { t: "ターゲット", rows: [{ l: "Xターゲット", v: "3338.727" }, { l: "Yターゲット", v: "0.0" }, { l: "Zターゲット", v: "2157.352" }, { l: "位置", v: "配置...", k: "button" }] },
  { t: "壁紙", rows: [{ l: "ファイル名", v: "(なし)", k: "file" }, { l: "表示", k: "on" }, { l: "グレー", k: "on" }] },
];

const snaps: { l: string; w: number; on?: boolean; faint?: boolean }[] = [
  { l: "端点", w: 74, on: true }, { l: "近接点", w: 93 }, { l: "点", w: 55, on: true }, { l: "中点", w: 74, on: true }, { l: "中心点", w: 93 },
  { l: "交点", w: 74, on: true }, { l: "垂直点", w: 93 }, { l: "接点", w: 74 }, { l: "四半円点", w: 112 }, { l: "ノット", w: 75 }, { l: "頂点", w: 75 },
  { l: "投影", w: 141, faint: true }, { l: "無効", w: 74, faint: true },
];

const PropRow = ({ p, id }: { p: Prop; id: string }) => {
  const k = p.k ?? "text";
  return (
    <Row>
      <RowLabel htmlFor={id} $dim={p.dim}>{p.l}</RowLabel>
      <Cell $white={k === "text" || k === "select" || k === "file"}>
        {(k === "text" || k === "plain" || k === "file") && <CellInput id={id} defaultValue={p.v} readOnly={k === "plain"} />}
        {k === "file" && <PushButton $small aria-label="参照">...</PushButton>}
        {k === "select" && (
          <>
            <CellSelect id={id} defaultValue={p.v}><option>{p.v}</option></CellSelect>
            <Chevron><svg width="11" height="7" viewBox="0 0 11 7" fill="none" stroke="#555"><path d="M1 1L5.500 6L10 1" /></svg></Chevron>
          </>
        )}
        {k === "button" && <PushButton id={id}>{p.v}</PushButton>}
        {(k === "on" || k === "off") && <Check id={id} type="checkbox" defaultChecked={k === "on"} />}
      </Cell>
    </Row>
  );
};

/* Post-and-beam frame seen from the front. */
const beams = [
  { y: 170, h: 69 },
  { y: 421, h: 52 },
];
const posts = [
  { x: 452, y: 170, w: 60, h: 251, m: 482 }, { x: 652, y: 170, w: 60, h: 251, m: 682 }, { x: 899, y: 170, w: 60, h: 251, m: 929 },
  { x: 447, y: 421, w: 70, h: 252, m: 482 }, { x: 648, y: 421, w: 69, h: 252, m: 682 }, { x: 894, y: 421, w: 69, h: 252, m: 929 },
];
const overlap = (x: number, w: number) => {
  const a = Math.max(x, 482);
  return { x: a, width: Math.min(x + w, 929) - a };
};

const Model = () => (
  <Scene shapeRendering="crispEdges" fill="none">
    {beams.map((b) => <rect key={b.y} x="482" y={b.y} width="447" height={b.h} fill="#70da78" />)}
    {posts.map((p, i) => <rect key={i} x={p.x} y={p.y} width={p.w} height={p.h} fill="#d67275" />)}
    {posts.map((p, i) => <path key={i} d={`M${p.m} ${p.y}V${p.y + p.h}`} stroke="#ff2b2b" strokeWidth="3" />)}
    {posts.map((p, i) => <rect key={i} {...overlap(p.x, p.w)} y={p.y} height={beams[i < 3 ? 0 : 1].h} fill="#a8ad72" />)}
    {beams.map((b) => (
      <g key={b.y}>
        <path d={`M482 ${b.y - 1}H929`} stroke="#25f025" strokeWidth="2" />
        <path d={`M482 ${b.y + b.h}V${b.y}H929V${b.y + b.h}Z`} stroke="#0a8c0a" />
        <path d={`M682 ${b.y}V${b.y + b.h}`} stroke="#a07a40" strokeWidth="3" />
        <path d={`M682 ${b.y}V${b.y + b.h}`} stroke="#5f8a28" />
        {posts.map((p, i) => (i < 3) === (b.y < 300) && <rect key={i} {...overlap(p.x, p.w)} y={b.y + b.h - 1} height="1" fill="#5f8a28" />)}
        <path d={`M482 ${b.y}V${b.y + b.h}M929 ${b.y}V${b.y + b.h}`} stroke="#8a7a38" />
      </g>
    ))}
    {posts.map((p, i) => <rect key={i} x={p.x} y={p.y} width={p.w} height={p.h} stroke="#930000" />)}
    <rect x="476" y="666" width="13" height="13" fill="#333" fillOpacity="0.2" />
  </Scene>
);

export default function App() {
  return (
    <Frame>
      <Global />
      <Gradients />
      <Window>
        <TitleBar>
          <svg width="25" height="25" viewBox="0 0 24 24" aria-hidden="true">
            <rect width="24" height="24" fill="#000" />
            <path d="M9 1L4 9L3 13L1 14L5 16L3 18L8 19L13 23L17 23L22 16L23 12L20 14L15 16L11 13L8 9Z" fill="#fff" />
            <path d="M15 12L19 12L21 9L22 13L18 15Z" fill="#ddd" />
            <path d="M7 14L12 18" stroke="#000" />
            <text x="18" y="7" fontSize="8" fill="#fff" fontFamily="Roboto, sans-serif">7</text>
          </svg>
          <TitleText>無題.3dm (25 KB) - Rhino 7 商用版 - [Front]</TitleText>
          <CaptionButton aria-label="最小化"><svg width="15" height="15" stroke="#000"><path d="M0 7.500H15" /></svg></CaptionButton>
          <CaptionButton aria-label="最大化"><svg width="16" height="16" fill="none" stroke="#000" strokeWidth="1.500"><rect x="1" y="1" width="14" height="14" rx="2" /></svg></CaptionButton>
          <CaptionButton aria-label="閉じる"><svg width="16" height="16" stroke="#000" strokeWidth="1.200"><path d="M1 1L15 15M15 1L1 15" /></svg></CaptionButton>
        </TitleBar>
        <MenuBar>
          {menus.map(([t, k, w]) => (
            <MenuItem key={t} $w={w}>{t}{k && <>(<u>{k}</u>)</>}</MenuItem>
          ))}
        </MenuBar>

        <CommandDock>
          <Grip />
          <CommandBody>
            <HistoryRow>
              <History>
                <HistoryLine>結合するオブジェクトを選択。曲線、サーフェス、ポリサーフェス、SubDは開いていなければなりません ( 非結合メッシュを結合(J)=はい&nbsp; SubDの結合エッジ(S)=スムーズ )</HistoryLine>
                <HistoryLine>3個の曲線を選択に追加しました。</HistoryLine>
                <HistoryLine>3個の曲線を選択に追加しました。</HistoryLine>
              </History>
              <ScrollTrack><ScrollThumb /></ScrollTrack>
            </HistoryRow>
            <PromptRow>
              <PromptLabel htmlFor="command">コマンド:</PromptLabel>
              <Caret />
              <PromptInput id="command" />
              <Spinner>
                <SpinButton aria-label="上へ"><svg width="9" height="5"><path d="M0 5L4.500 0L9 5Z" /></svg></SpinButton>
                <SpinButton aria-label="下へ"><svg width="9" height="5"><path d="M0 0L4.500 5L9 0Z" /></svg></SpinButton>
              </Spinner>
            </PromptRow>
          </CommandBody>
        </CommandDock>

        <Ribbon>
          <Grip />
          <RibbonBody>
            <RibbonTabs>
              <RibbonTabScroller>
                {ribbonTabs.map(([t, w]) => {
                  const on = t === "ビューポートレイアウト";
                  return (
                    <RibbonTab key={t} $w={w} $on={on}>
                      {on && <TabSlope width="23" height="27" fill={C.face} stroke={C.line}><path d="M0 26.500L22 0.500H23V28" stroke="none" /><path d="M0 26.500L22 0.500H23" fill="none" /></TabSlope>}
                      {t}
                    </RibbonTab>
                  );
                })}
              </RibbonTabScroller>
              <TabMore aria-label="その他のタブ"><svg width="12" height="10" fill="none" stroke="#111" strokeWidth="1.500"><path d="M1 1L5 5L1 9M7 1L11 5L7 9" /></svg></TabMore>
              <GearButton aria-label="設定"><Gear size={21} color="#8a8a8a" fill="#d8d8d8" /></GearButton>
            </RibbonTabs>
            <IconRow>
              {topIcons.map((ic, i) => (
                <React.Fragment key={ic.n}>
                  {(i === 7 || i === 13 || i === 19) && <Divider />}
                  <Tool aria-label={ic.n}><Glyph x={ic.x} y={ic.y} icon={ic} /></Tool>
                </React.Fragment>
              ))}
            </IconRow>
          </RibbonBody>
        </Ribbon>

        <Middle>
          <Palette>
            <PaletteGrip />
            <PaletteGrid>
              {palette.map((ic, i) => {
                const r = Math.floor(i / 2);
                return (
                  <Tool key={ic.n} aria-label={ic.n}>
                    <Glyph x={6 + (i % 2) * 126} y={r < 9 ? 33 + r * 126 : 27 + (r - 9) * 126} icon={ic} />
                  </Tool>
                );
              })}
            </PaletteGrid>
          </Palette>

          <ViewColumn>
            <Viewport>
              <Model />
              <Axes width="70" height="70" stroke="#5c5c5c" fill="none">
                <path d="M4.500 19V64.500H49" />
                <g fill="#5c5c5c" stroke="none" fontSize="21" fontWeight="400" fontFamily="Roboto, sans-serif"><text x="7" y="20">z</text><text x="53" y="65">x</text></g>
              </Axes>
              <ViewTitle>
                Front
                <svg width="18" height="20"><path d="M1.500 1V19" stroke="#223" /><path d="M4 7H16L10 14Z" fill="#223" /></svg>
              </ViewTitle>
            </Viewport>
            <ViewTabs>
              <ViewTab $w={80}>Parallel</ViewTab>
              <ViewTab $w={48}>Top</ViewTab>
              <ViewTab $w={55} $on><ViewSlope width="23" height="26" stroke={C.line}><path d="M0 0L22 25.500H23" fill="none" /></ViewSlope>Front</ViewTab>
              <ViewTab $w={64}>Right</ViewTab>
              <ViewTab $w={20} aria-label="追加"><svg width="15" height="15" viewBox="0 0 15 15" fill="#fff" stroke="#777"><path d="M5.500 1.500H9.500V5.500H13.500V9.500H9.500V13.500H5.500V9.500H1.500V5.500H5.500Z" /></svg></ViewTab>
            </ViewTabs>
          </ViewColumn>

          <Side>
            <SideTitle>プロパティ: ビューのプロパティ<SideGrip /></SideTitle>
            <SideTabs>
              {sideIcons.map((s, i) => <SideTab key={s.n} $on={i === 0} aria-label={s.n}>{s.g}</SideTab>)}
            </SideTabs>
            <SideBody>
              <ModeRow>
                <ModeButton $on aria-label="カメラ">
                  <svg width="42" height="42" viewBox="83 219 126 126" fill="none">
                    <path d="M101 268Q101 262 108 262V254L122 250L130 254L138 247H160L170 258L186 262Q191 264 191 272V312Q190 317 182 317H108Q101 316 101 308Z" fill="#2c2c2c" stroke="#111" strokeWidth="2" />
                    <path d="M140 252H158" stroke="#888" strokeWidth="3" />
                    <circle cx="154" cy="291" r="26" fill="#555" stroke="#ddd" strokeWidth="3" />
                    <circle cx="154" cy="291" r="18" fill="#111" stroke="#999" strokeWidth="3" />
                    <circle cx="154" cy="291" r="9" fill="#2c4a38" />
                    <path d="M106 272V306" stroke="#999" strokeWidth="3" />
                  </svg>
                </ModeButton>
                <ModeButton aria-label="表示枠">
                  <svg width="42" height="42" viewBox="225 219 126 126" fill="none">
                    <rect x="235" y="234" width="104" height="95" fill="#9a9a9a" stroke="#444" strokeWidth="4" />
                    <rect x="244" y="246" width="86" height="72" fill="#9adcf4" stroke="#5cc0e8" strokeWidth="4" />
                    <rect x="253" y="256" width="68" height="52" fill="#fff" stroke="#e83838" strokeWidth="6" />
                  </svg>
                </ModeButton>
              </ModeRow>
              {groups.map((g) => (
                <section key={g.t}>
                  <GroupTitle>{g.t}</GroupTitle>
                  {g.rows.map((p, i) => <PropRow key={i} p={p} id={`${g.t}-${i}`} />)}
                </section>
              ))}
            </SideBody>
          </Side>
        </Middle>

        <SnapBar>
          <Grip />
          <Snaps>
            {snaps.map((s) => (
              <Snap key={s.l} $w={s.w}>
                <Check type="checkbox" defaultChecked={s.on} $faint={s.faint} />
                {s.l}
              </Snap>
            ))}
          </Snaps>
        </SnapBar>
        <Status>
          <StatusCell>作業平面</StatusCell>
          <StatusCell>x 7384.820</StatusCell>
          <StatusCell>y 6006.638</StatusCell>
          <StatusCell>z 0.000</StatusCell>
          <StatusCell>ミリメートル</StatusCell>
          <LayerCell><Swatch />デフォルト</LayerCell>
          <StatusCell>グリッドスナップ</StatusCell>
          <StatusCell>直交モード</StatusCell>
          <StatusCell>平面モード</StatusCell>
          <StatusCell $on>Osnap</StatusCell>
          <StatusCell $on>スマートトラック</StatusCell>
          <StatusCell $on>ガムボール</StatusCell>
          <StatusCell>ヒストリを記録</StatusCell>
          <StatusCell>フィルタ</StatusCell>
          <MeterCell>CPU使用率: 0.1 %</MeterCell>
          <StatusCell aria-label="通知領域" />
        </Status>
      </Window>
    </Frame>
  );
}
